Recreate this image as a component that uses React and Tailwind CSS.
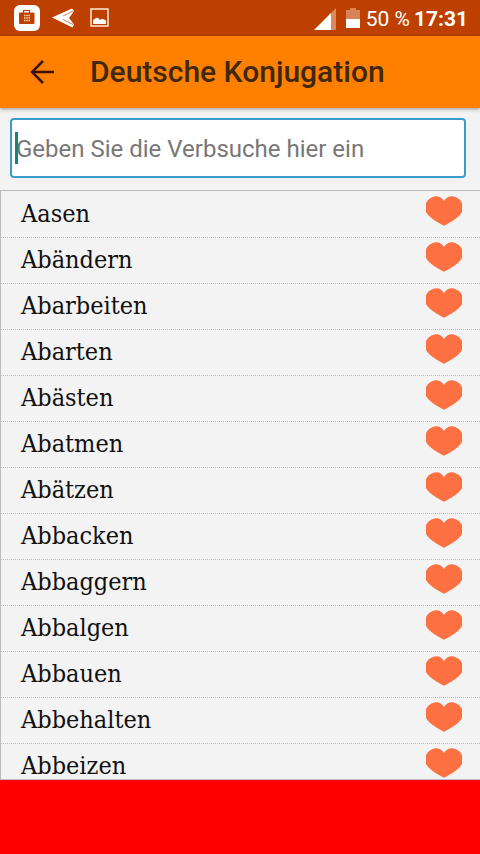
import { useState } from 'react';

const VERBS = [
  'Aasen',
  'Abändern',
  'Abarbeiten',
  'Abarten',
  'Abästen',
  'Abatmen',
  'Abätzen',
  'Abbacken',
  'Abbaggern',
  'Abbalgen',
  'Abbauen',
  'Abbehalten',
  'Abbeizen',
];

/**
 * System status bar: notifications on the left, signal, battery and clock on the right
 */
function StatusBar() {
  return (
    <div className="flex h-9 shrink-0 items-center justify-between bg-[#bd4000] pl-3.5 pr-3 text-white">
      <div className="flex items-center gap-3">
        <svg className="h-[26px] w-[26px]" viewBox="0 0 26 26" fill="none">
          <rect width="26" height="26" rx="6" fill="#fff" />
          <path d="M9.5 8V5.500h6V8" stroke="#bd4000" strokeWidth="1.2" />
          <rect x="5" y="7.500" width="15.500" height="11.500" rx="1" fill="#bd4000" />
          <path
            d="M10 10.500h6M10 13h6M10 15.500h6"
            stroke="#ffd9a8"
            strokeWidth="1.3"
            strokeDasharray="1.5 .75"
          />
        </svg>
        <svg className="h-5 w-6" viewBox="0 0 24 20">
          <path d="M0 9.500 20 .5l2 2.500L17 10l5 6.500-1.500 3z" fill="#fff" />
          <path d="M11 8 21 3M11 11.500l10 5" stroke="#bd4000" strokeWidth=".7" />
        </svg>
        <svg className="ml-0.5 h-5 w-5" viewBox="0 0 20 20" fill="none">
          <rect x="1" y="1" width="17" height="17" stroke="#ffe9dc" strokeWidth="1.500" />
          <path d="M3 16v-3.500c1-1.500 2-1.500 3-2.500 2-.8 3 1 4 2 1.500-1.500 3-1 6 .5V16z" fill="#fff" />
        </svg>
      </div>
      <div className="flex items-center pt-0.5 font-['Roboto',sans-serif] text-[21px] leading-6">
        <svg className="mr-2.5 h-[22px] w-[22px]" viewBox="0 0 22 22">
          <path d="M22 0v22H17V5z" fill="#dd8a60" />
          <path d="M17 5v17H0z" fill="#fff" />
        </svg>
        <svg className="mr-1.5 h-[22px] w-3.5" viewBox="0 0 14 22">
          <path d="M4 0h6v2h4v10H0V2h4z" fill="#d98255" />
          <path d="M0 11h14v9H0z" fill="#fff" />
        </svg>
        <span>50 %</span>
        <span className="ml-1 font-bold">17:31</span>
      </div>
    </div>
  );
}

function AppBar() {
  return (
    <header className="z-10 flex h-[72px] shrink-0 items-center bg-[#ff8000] pl-[30px] shadow-[0_1px_4px_rgba(0,0,0,0.4)]">
      <button type="button" aria-label="Zurück" className="mr-9">
        <svg className="h-6 w-6" viewBox="0 0 24 24" fill="none" stroke="#3d1000" strokeWidth="2.5">
          <path d="M24 12H2M13 1 2 12l11 11" />
        </svg>
      </button>
      <h1 className="font-['Roboto',sans-serif] text-[30px] font-medium leading-9 text-[#40280e]">
        Deutsche Konjugation
      </h1>
    </header>
  );
}

function SearchBox({ value, onChange }) {
  return (
    <div className="relative mb-3 ml-2.5 mr-3.5 mt-2.5 shrink-0">
      <input
        type="text"
        aria-label="Verbsuche"
        placeholder="Geben Sie die Verbsuche hier ein"
        value={value}
        onChange={(e) => onChange(e.target.value)}
        className="block h-[60px] w-full rounded border-2 border-[#3a9cc8] bg-white px-1 pt-0.5 font-['Roboto',sans-serif] text-2xl text-black outline-none placeholder:text-[#777777]"
      />
      {!value && <span className="absolute left-[5px] top-3.5 h-8 w-[3px] bg-[#128573]" />}
    </div>
  );
}

function VerbRow({ verb }) {
  return (
    <li className="flex h-[46px] shrink-0 items-start justify-between border-b border-dotted border-[#bcbcbc] pl-5 pr-[18px]">
      <span className="pt-1.5 font-['DejaVu_Serif_Condensed','DejaVu_Serif',serif] text-[25px] leading-8 text-[#111111]">
        {verb}
      </span>
      <button type="button" aria-label={`${verb} merken`} className="mt-1">
        <svg className="h-[30px] w-9" viewBox="0 0 36 30">
          <path
            d="M18 5C16 2 13 0 9.500.3 6 .8 2 3 0 7v9c2 4 9 9.500 18 13.700C27 25.500 34 20 36 16V7C34 3 30 .8 26.500.3 23 0 20 2 18 5z"
            fill="#fd7041"
          />
        </svg>
      </button>
    </li>
  );
}

export default function App() {
  const [query, setQuery] = useState('');
  const verbs = VERBS.filter((v) => v.toLowerCase().includes(query.toLowerCase()));

  return (
    <div className="flex h-screen flex-col overflow-hidden bg-[#f3f3f3]">
      <StatusBar />
      <AppBar />
      <SearchBox value={query} onChange={setQuery} />
      <ul className="flex min-h-0 flex-1 flex-col overflow-hidden border-b border-l border-t border-[#b8bcbc] pt-px">
        {verbs.map((verb) => (
          <VerbRow key={verb} verb={verb} />
        ))}
      </ul>
      <div className="h-[74px] shrink-0 bg-[#ff0000]" />
    </div>
  );
}
